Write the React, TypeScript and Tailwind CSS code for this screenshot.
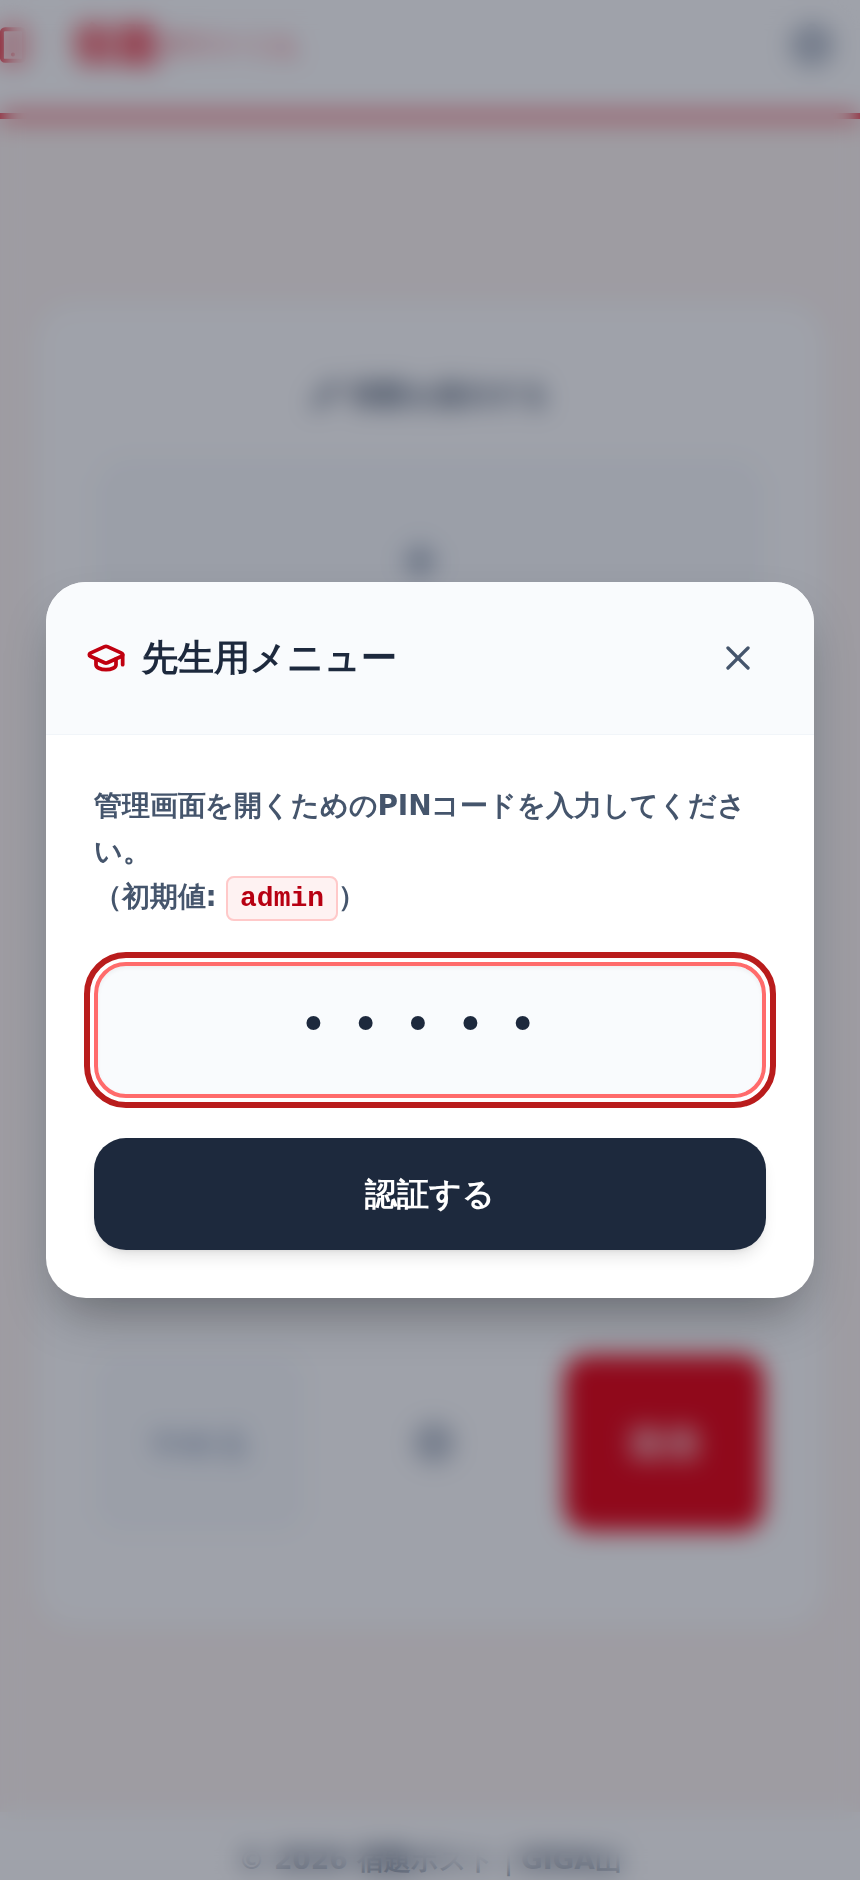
import { GraduationCap, Settings, Smartphone, X, Plus, Pencil } from 'lucide-react'

const font = { fontFamily: '"DejaVu Sans", sans-serif' }

function BackgroundPage() {
  return (
    <div className="flex min-h-[1880px] flex-col bg-[#fdf5f2]">
      <header className="flex h-[119px] items-center justify-between border-b-[6px] border-[#e60012] bg-white pr-6 pb-6">
        <div className="-ml-[6px] flex items-center text-[#e60012]">
          <Smartphone size={38} strokeWidth={2.5} />
          <span className="ml-10 text-[44px] font-bold">宿題</span>
          <span className="text-[27px] font-medium">ポストくん</span>
        </div>
        <Settings size={48} className="text-slate-500" />
      </header>
      <main className="flex-1 px-9 pt-[184px]">
        <section className="rounded-[40px] bg-white px-[60px] pt-[72px] pb-[96px]">
          <h1 className="flex items-center justify-center gap-2.5 text-[28px] leading-10 font-bold text-slate-600">
            <Pencil size={28} strokeWidth={3} />
            宿題を提出する
          </h1>
          <div className="mt-[44px] flex h-[840px] items-start justify-center rounded-[32px] bg-slate-50 pt-[78px] pr-5">
            <Plus size={48} strokeWidth={3} className="text-slate-500" />
          </div>
          <div className="mt-14 flex h-[176px] items-center justify-between">
            <div className="flex h-full w-[208px] items-center justify-center rounded-3xl bg-slate-50 text-[32px] font-bold text-slate-400">
              やめる
            </div>
            <Settings size={44} className="text-slate-500" />
            <div className="flex h-full w-[200px] items-center justify-center rounded-3xl bg-[#e60012] text-4xl font-bold text-white">
              送信
            </div>
          </div>
        </section>
      </main>
      <footer className="flex h-[68px] items-end justify-center bg-white text-[26.5px] font-bold text-slate-600">
        © 2026 宿題ポスト｜GIGA山
      </footer>
    </div>
  )
}

export default function App() {
  return (
    <div className="relative" style={font}>
      <BackgroundPage />
      <div className="fixed inset-0 flex items-center justify-center bg-slate-900/40 backdrop-blur-md">
        <div className="w-full max-w-3xl overflow-hidden rounded-[40px] bg-white shadow-[0_25px_50px_-12px_rgba(0,0,0,0.35)]">
          <div className="flex items-center justify-between border-b border-slate-100 bg-[#f9fbfd] p-10">
            <h2 className="flex items-center gap-4 text-4xl font-bold text-slate-800">
              <GraduationCap size={40} strokeWidth={2.25} className="text-[#c00010]" />
              先生用メニュー
            </h2>
            <button className="p-4 text-slate-600">
              <X size={40} strokeWidth={2} />
            </button>
          </div>
          <div className="flex flex-col p-12">
            <p className="mb-10 text-[28px] leading-relaxed font-bold tracking-[-0.15px] text-slate-600">
              管理画面を開くためのPINコードを入力してください。
              <br />
              （初期値:{' '}
              <code className="rounded-lg border-2 border-red-200 bg-red-50 px-3 py-[5px] font-['Liberation_Mono'] tracking-normal text-[#b70012]">
                admin
              </code>
              ）
            </p>
            <input
              type="password"
              readOnly
              value="admin"
              className="mb-10 h-[136px] w-full rounded-[32px] border-4 border-[#ff6b6b] bg-[#f9fbfd] pb-3 text-center text-5xl tracking-[0.5em] text-slate-800 shadow-inner outline-[6px] outline-offset-4 outline-[#b91c1c] outline-solid"
            />
            <button className="rounded-[32px] bg-slate-800 py-8 text-[32px] leading-12 font-bold text-white shadow-lg">
              認証する
            </button>
          </div>
        </div>
      </div>
    </div>
  )
}
